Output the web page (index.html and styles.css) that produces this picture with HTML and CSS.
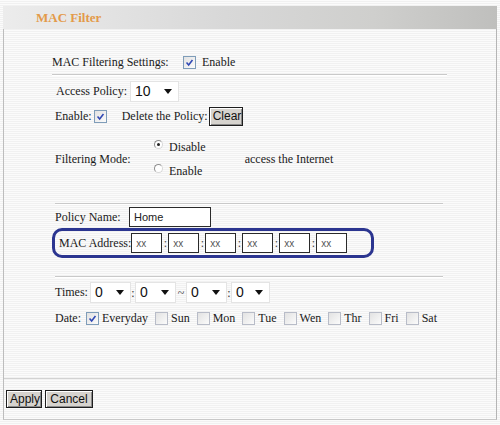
FILE: index.html
```html
<!DOCTYPE html>
<html>
<head>
<meta charset="utf-8">
<link rel="stylesheet" href="styles.css">
</head>
<body>
<div class="frame">
  <div class="header"><span class="title">MAC Filter</span></div>
  <div class="content">
    <div class="row settings">
      <span class="lbl w131">MAC Filtering Settings:</span>
      <span class="cb on"><svg viewBox="0 0 13 13"><path d="M3 6.5 L5.5 9.5 L10 3.5" /></svg></span>
      <span class="ml3">Enable</span>
    </div>
    <div class="rule r1"></div>
    <div class="row access">
      <span class="lbl">Access Policy:</span>
      <span class="sel w48"><span class="val">10</span><span class="arr"></span></span>
    </div>
    <div class="row enable">
      <span class="lbl">Enable:</span>
      <span class="cb on ml2"><svg viewBox="0 0 13 13"><path d="M3 6.5 L5.5 9.5 L10 3.5" /></svg></span>
      <span class="ml12">Delete the Policy:</span>
      <button class="btn clear">Clear</button>
    </div>
    <div class="mode">
      <span class="lbl w100">Filtering Mode:</span>
      <div class="radios">
        <div class="ropt"><span class="rd on"></span><span>Disable</span></div>
        <div class="ropt"><span class="rd"></span><span>Enable</span></div>
      </div>
      <span class="inet">access the Internet</span>
    </div>
    <div class="rule r2"></div>
    <div class="row pname">
      <span class="lbl w74">Policy Name:</span>
      <span class="inp wide">Home</span>
    </div>
    <div class="macbox">
      <span class="lbl">MAC Address:</span>
      <span class="inp mac">xx</span><span class="colon">:</span>
      <span class="inp mac">xx</span><span class="colon">:</span>
      <span class="inp mac">xx</span><span class="colon">:</span>
      <span class="inp mac">xx</span><span class="colon">:</span>
      <span class="inp mac">xx</span><span class="colon">:</span>
      <span class="inp mac">xx</span>
    </div>
    <div class="rule r3"></div>
    <div class="row times">
      <span class="lbl">Times:</span>
      <span class="sel w41 ml2"><span class="val">0</span><span class="arr"></span></span><span class="sep">:</span>
      <span class="sel w41"><span class="val">0</span><span class="arr"></span></span><span class="sep tilde">~</span>
      <span class="sel w41"><span class="val">0</span><span class="arr"></span></span><span class="sep">:</span>
      <span class="sel w38"><span class="val">0</span><span class="arr"></span></span>
    </div>
    <div class="row date">
      <span class="lbl">Date:</span>
      <span class="cb on ml5"><svg viewBox="0 0 13 13"><path d="M3 6.5 L5.5 9.5 L10 3.5" /></svg></span><span class="day">Everyday</span>
      <span class="cb"></span><span class="day">Sun</span>
      <span class="cb"></span><span class="day">Mon</span>
      <span class="cb"></span><span class="day">Tue</span>
      <span class="cb"></span><span class="day">Wen</span>
      <span class="cb"></span><span class="day">Thr</span>
      <span class="cb"></span><span class="day">Fri</span>
      <span class="cb"></span><span class="day">Sat</span>
    </div>
  </div>
  <div class="footer">
    <button class="btn apply">Apply</button>
    <button class="btn cancel">Cancel</button>
  </div>
</div>
</body>
</html>
```

FILE: styles.css
```css
html, body {
  margin: 0;
  padding: 0;
}
body {
  width: 500px;
  height: 425px;
  overflow: hidden;
  font-family: "Liberation Serif", "Times New Roman", serif;
  font-size: 12px;
  color: #1a1a1a;
  background: repeating-linear-gradient(to bottom, #fbfbfb 0px, #fbfbfb 1px, #f1f1f1 1px, #f1f1f1 2px);
}
.frame {
  margin: 6px 0 0 3px;
  width: 492px;
  height: 413px;
  border-left: 1px solid #bdbdbd;
  border-right: 1px solid #b5b5b5;
  border-bottom: 1px solid #c8c8c8;
  display: flex;
  flex-direction: column;
}
.header {
  height: 23px;
  margin-left: -1px;
  margin-right: -1px;
  background: linear-gradient(to right, #ececec 0%, #d8d8d8 45%, #cfcfcd 75%, #bfbfbd 100%);
  display: flex;
  align-items: center;
  padding-left: 33px;
}
.title {
  font-weight: bold;
  font-size: 13px;
  color: #e39a4a;
}
.content {
  flex: 1;
  padding-top: 23px;
  padding-left: 48px;
  display: flex;
  flex-direction: column;
}
.row {
  display: flex;
  align-items: center;
  white-space: nowrap;
}
.settings { height: 20px; padding-left: 0; }
.w131 { width: 131px; }
.ml2 { margin-left: 2px; }
.ml3 { margin-left: 3px; }
.ml5 { margin-left: 5px; }
.ml12 { margin-left: 12px; }
.rule {
  height: 1px;
  background: #c9c9c9;
  border-bottom: 1px solid #ffffff;
}
.r1 { margin-top: 2px; width: 395px; margin-left: 0; }
.r2 { margin-top: 21px; width: 388px; margin-left: 3px; }
.r3 { margin-top: 18px; width: 388px; margin-left: 3px; }
.access { margin-top: 5px; height: 20px; padding-left: 4px; }
.access .lbl { margin-right: 3px; }
.enable { margin-top: 6px; height: 18px; padding-left: 3px; }
.mode {
  margin-top: 11px;
  height: 46px;
  display: flex;
  align-items: center;
  padding-left: 3px;
}
.w100 { width: 99px; }
.radios {
  display: flex;
  flex-direction: column;
  gap: 6px;
}
.ropt {
  display: flex;
  align-items: center;
  height: 18px;
}
.rd {
  width: 9px;
  height: 9px;
  border-radius: 50%;
  border: 1px solid #8e8e8e;
  border-right-color: #d8d8d8;
  border-bottom-color: #d8d8d8;
  background: #fff;
  margin-right: 6px;
  margin-top: -6px;
  position: relative;
  box-sizing: border-box;
}
.rd.on::after {
  content: "";
  position: absolute;
  left: 2px;
  top: 2px;
  width: 3px;
  height: 3px;
  border-radius: 50%;
  background: #222;
}
.inet { margin-left: 39px; }
.pname { margin-top: 2px; height: 20px; padding-left: 3px; }
.w74 { width: 74px; }
.inp {
  box-sizing: border-box;
  height: 20px;
  border: 1px solid #2a2a2a;
  background: #fff;
  font-family: "Liberation Sans", Arial, sans-serif;
  font-size: 11px;
  display: inline-flex;
  align-items: center;
  padding-left: 4px;
  color: #222;
}
.wide { width: 82px; }
.macbox {
  margin-top: 1px;
  margin-left: 0;
  box-sizing: border-box;
  width: 322px;
  height: 30px;
  border: 3px solid #2b3590;
  border-radius: 10px;
  display: flex;
  align-items: center;
  padding-left: 4px;
  white-space: nowrap;
}
.macbox .lbl { margin-right: 0; }
.mac { width: 31px; height: 20px; color: #555; font-size: 10px; }
.colon { width: 6px; text-align: center; color: #444; }
.times { margin-top: 4px; height: 20px; padding-left: 3px; }
.sel {
  box-sizing: border-box;
  height: 21px;
  background: #fff;
  border: 1px solid #e4e4e4;
  display: inline-flex;
  align-items: center;
  justify-content: space-between;
  padding: 0 6px 0 4px;
  font-family: "Liberation Sans", Arial, sans-serif;
  font-size: 14px;
  color: #111;
}
.w48 { width: 49px; }
.w41 { width: 41px; }
.w38 { width: 39px; }
.arr {
  width: 0;
  height: 0;
  border-left: 4px solid transparent;
  border-right: 4px solid transparent;
  border-top: 5px solid #111;
}
.sep { width: 4px; text-align: center; color: #333; padding-top: 3px; }
.tilde { width: 10px; }
.date { margin-top: 7px; height: 18px; padding-left: 3px; }
.cb {
  box-sizing: border-box;
  width: 13px;
  height: 13px;
  border: 1px solid #b8bcc8;
  background: linear-gradient(135deg, #e2e2e2, #fbfbfb);
  display: inline-block;
  margin-right: 3px;
}
.cb svg { display: block; width: 11px; height: 11px; }
.cb svg path { fill: none; stroke: #3048b4; stroke-width: 1.8; }
.cb.on { border-color: #7f9db9; }
.day { margin-right: 7px; }
.btn {
  font-family: "Liberation Sans", Arial, sans-serif;
  font-size: 12px;
  background: #d6d3ce;
  border: 1px solid #1e1e1e;
  box-shadow: inset 1px 1px 0 #ffffff, inset -1px -1px 0 #8a8a8a;
  padding: 0 3px;
  height: 18px;
  color: #111;
  margin: 0;
}
.clear { margin-left: 1px; width: 34px; height: 19px; }
.footer {
  height: 40px;
  border-top: 1px solid #d2d2d2;
  display: flex;
  align-items: center;
  gap: 3px;
  padding-left: 2px;
}
.apply { width: 36px; }
.cancel { width: 48px; }
```
